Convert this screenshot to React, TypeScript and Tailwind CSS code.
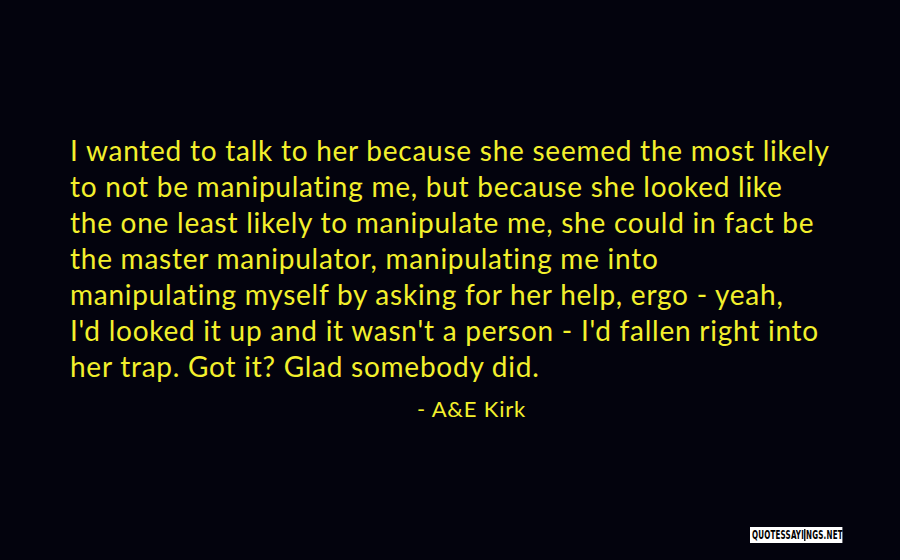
import React from "react";

const lines = [
  "I wanted to talk to her because she seemed the most likely",
  "to not be manipulating me, but because she looked like",
  "the one least likely to manipulate me, she could in fact be",
  "the master manipulator, manipulating me into",
  "manipulating myself by asking for her help, ergo - yeah,",
  "I'd looked it up and it wasn't a person - I'd fallen right into",
  "her trap. Got it? Glad somebody did.",
];

export default function App() {
  return (
    <div className="relative w-[900px] h-[560px] bg-[#03030d] overflow-hidden">
      <div className="pt-[132px] pl-[70px] font-['Lato',sans-serif] text-[#f3f02c] text-[28px] leading-[36px] tracking-[0.75px]">
        {lines.map((l, i) => (
          <div key={i} className="whitespace-nowrap">
            {l}
          </div>
        ))}
        <div className="mt-[13px] pl-[347px] text-[22px] leading-[24px] tracking-[0.8px] whitespace-nowrap">- A&amp;E Kirk</div>
      </div>
      <div className="absolute left-[750px] top-[527px] h-[16px] w-[140px] origin-left scale-x-[0.66] px-[3px] bg-white flex items-center font-['DejaVu_Sans_Condensed','Liberation_Sans',sans-serif] font-bold text-[12px] leading-none text-black tracking-[0.3px]">
        QUOTESSAYI<span className="border-l-2 border-black pl-[1px]">NGS.NET</span>
      </div>
    </div>
  );
}
